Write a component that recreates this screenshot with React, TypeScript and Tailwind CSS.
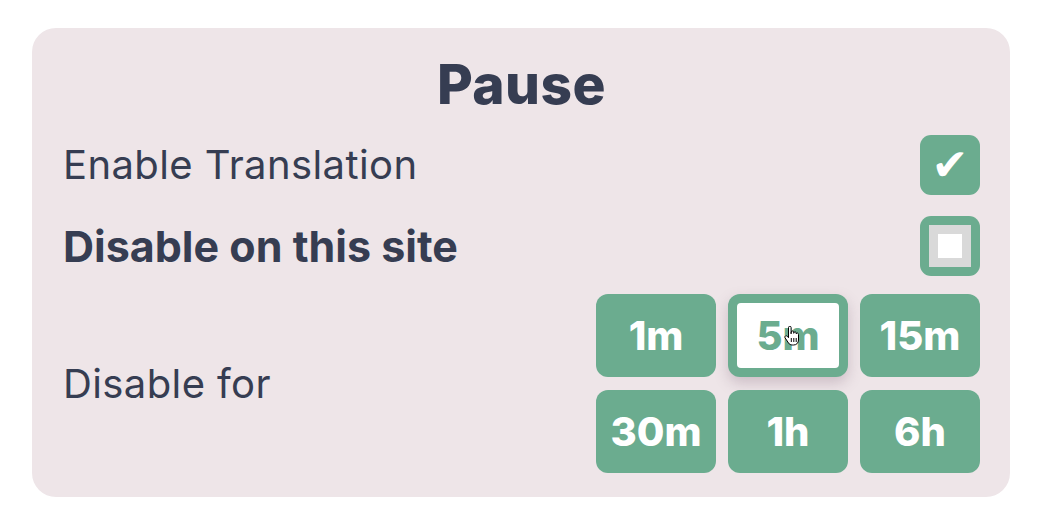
import { useState } from "react";

const DURATIONS = ["1m", "5m", "15m", "30m", "1h", "6h"];

const font = { fontFamily: "Inter, 'Noto Sans', sans-serif" };

function HandCursor() {
  return (
    <svg
      width="17"
      height="20"
      viewBox="0 0 17 20"
      className="pointer-events-none absolute left-[47px] top-[23px]"
    >
      <path
        d="M4.5 1.5c0-.8.6-1.3 1.3-1.3s1.3.5 1.3 1.3v6.3l.1-1.6c.1-.8.6-1.2 1.3-1.2s1.2.5 1.2 1.3v1l.2-.6c.2-.7.7-1 1.3-.9.6.1 1 .6 1 1.3v.8l.2-.3c.3-.5.8-.7 1.3-.5.5.2.8.7.8 1.3V14c0 2.8-2 5-4.8 5H8.2c-1.6 0-2.8-.7-3.7-2L1.2 12c-.5-.7-.4-1.5.2-1.9.6-.5 1.5-.3 2 .3l1.1 1.3V1.5z"
        fill="#fff"
        stroke="#000"
        strokeWidth="1"
        strokeLinejoin="round"
      />
      <path d="M7.3 12v4M9.8 12v4M12.2 12v4" stroke="#000" strokeWidth="1" />
    </svg>
  );
}

export default function App() {
  const [enabled, setEnabled] = useState(true);
  const [siteDisabled, setSiteDisabled] = useState(false);
  const [selected, setSelected] = useState("5m");

  return (
    <div className="min-h-screen bg-white pt-[28px] pl-8 pr-[34px]" style={font}>
      <div className="rounded-[24px] bg-[#eee5e8] pl-[31px] pr-[30px] pt-[24px] pb-[24px] text-[#363d52]">
        <h1 className="text-center text-[55px] font-extrabold leading-[64px] tracking-[0.5px]">
          Pause
        </h1>

        <div className="mt-[19px] flex h-[60px] items-center justify-between">
          <span className="text-[40px] font-normal tracking-[0.4px]">Enable Translation</span>
          <button
            onClick={() => setEnabled(!enabled)}
            className="flex h-[60px] w-[60px] items-center justify-center rounded-[11px] bg-[#6bac8f] text-[44px] font-bold leading-none text-white"
            style={{ fontFamily: "'DejaVu Sans', sans-serif" }}
          >
            {enabled ? "✔" : ""}
          </button>
        </div>

        <div className="mt-[21px] flex h-[60px] items-center justify-between">
          <span className="text-[43px] font-bold">Disable on this site</span>
          <button
            onClick={() => setSiteDisabled(!siteDisabled)}
            className="flex h-[60px] w-[60px] items-center justify-center rounded-[11px] bg-[#6bac8f]"
          >
            <span className="flex h-[42px] w-[42px] items-center justify-center bg-[#d9d9d9]">
              <span className={siteDisabled ? "h-[24px] w-[24px] bg-[#6bac8f]" : "h-[24px] w-[24px] bg-white"} />
            </span>
          </button>
        </div>

        <div className="mt-[18px] flex items-center justify-between">
          <span className="text-[40px] font-normal tracking-[0.4px]">Disable for</span>
          <div className="grid grid-cols-[120px_120px_120px] gap-x-[12px] gap-y-[13px]">
            {DURATIONS.map((d) =>
              d === selected ? (
                <button
                  key={d}
                  onClick={() => setSelected(d)}
                  className="flex h-[83px] items-center justify-center rounded-[12px] bg-[#6bac8f] p-[9px] shadow-[0_6px_14px_rgba(120,90,110,0.28)]"
                >
                  <span className="relative flex h-full w-full items-center justify-center rounded-[4px] bg-white text-[40px] font-extrabold text-[#6bac8f]">
                    {d}
                    <HandCursor />
                  </span>
                </button>
              ) : (
                <button
                  key={d}
                  onClick={() => setSelected(d)}
                  className="flex h-[83px] items-center justify-center rounded-[12px] bg-[#6bac8f] text-[40px] font-extrabold text-white"
                >
                  {d}
                </button>
              )
            )}
          </div>
        </div>
      </div>
    </div>
  );
}
